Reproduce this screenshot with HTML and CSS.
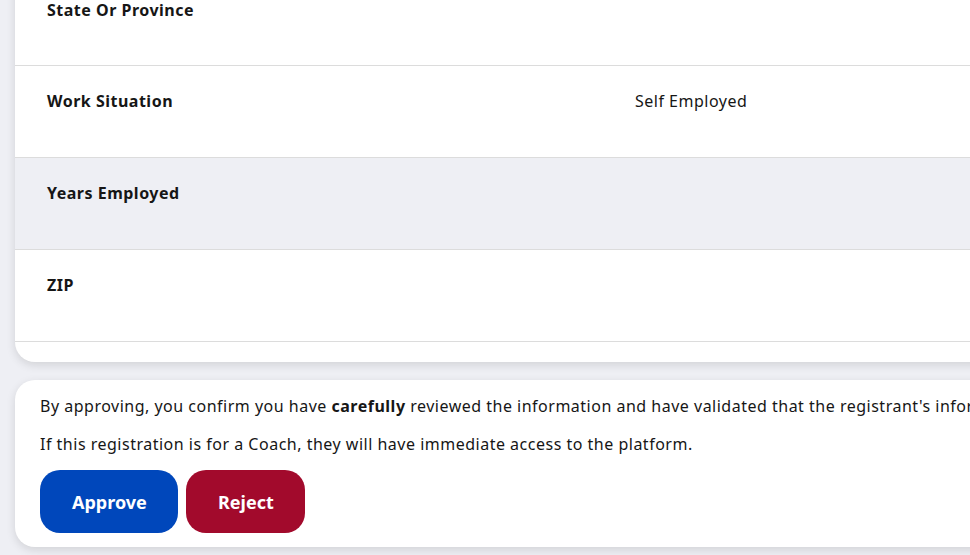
FILE: index.html
```html
<!DOCTYPE html>
<html lang="en">
<head>
<meta charset="utf-8">
<title>Registration Review</title>
<link rel="stylesheet" href="styles.css">
</head>
<body>
<main class="page">
  <section class="card details">
    <div class="row"><div class="label">State Or Province</div><div class="value"></div></div>
    <div class="row"><div class="label">Work Situation</div><div class="value">Self Employed</div></div>
    <div class="row striped"><div class="label">Years Employed</div><div class="value"></div></div>
    <div class="row"><div class="label">ZIP</div><div class="value"></div></div>
  </section>
  <section class="card confirm">
    <p>By approving, you confirm you have <strong>carefully</strong> reviewed the information and have validated that the registrant's information is accurate.</p>
    <p>If this registration is for a Coach, they will have immediate access to the platform.</p>
    <div class="actions">
      <button class="btn approve">Approve</button>
      <button class="btn reject">Reject</button>
    </div>
  </section>
</main>
</body>
</html>
```
FILE: styles.css
```css
html, body {
  margin: 0;
  padding: 0;
  background: #eeeff4;
  overflow: hidden;
  height: 555px;
}
body {
  font-family: "Noto Sans", "Open Sans", sans-serif;
  color: #161616;
  font-size: 16px;
  letter-spacing: 0.5px;
}
.page {
  padding-left: 15px;
  display: flex;
  flex-direction: column;
  gap: 18px;
  width: 1200px;
}
.card {
  background: #ffffff;
  border-radius: 20px;
  box-shadow: 0 3px 10px rgba(0, 0, 0, 0.12);
}
.details {
  margin-top: -26px;
  padding-bottom: 20px;
}
.row {
  display: grid;
  grid-template-columns: 588px 1fr;
  height: 92px;
  box-sizing: border-box;
  padding: 23px 32px 0;
  border-bottom: 1px solid #dcdcdc;
  line-height: 24px;
}
.row:first-child {
  border-top: 1px solid #dcdcdc;
}
.row.striped {
  background: #eeeff4;
}
.label {
  font-weight: 700;
}
.confirm {
  padding: 14px 24px 14px 25px;
}
.confirm p {
  margin: 0 0 14px;
  line-height: 24px;
  white-space: nowrap;
}
.confirm strong {
  font-weight: 700;
}
.actions {
  display: flex;
  gap: 8px;
}
.btn {
  font-family: inherit;
  font-size: 18px;
  font-weight: 700;
  letter-spacing: 0;
  color: #ffffff;
  border: none;
  border-radius: 20px;
  height: 63px;
  padding: 0 32px;
}
.approve {
  background: #0047bb;
  width: 138px;
}
.reject {
  background: #a20a2c;
  width: 119px;
}
```
